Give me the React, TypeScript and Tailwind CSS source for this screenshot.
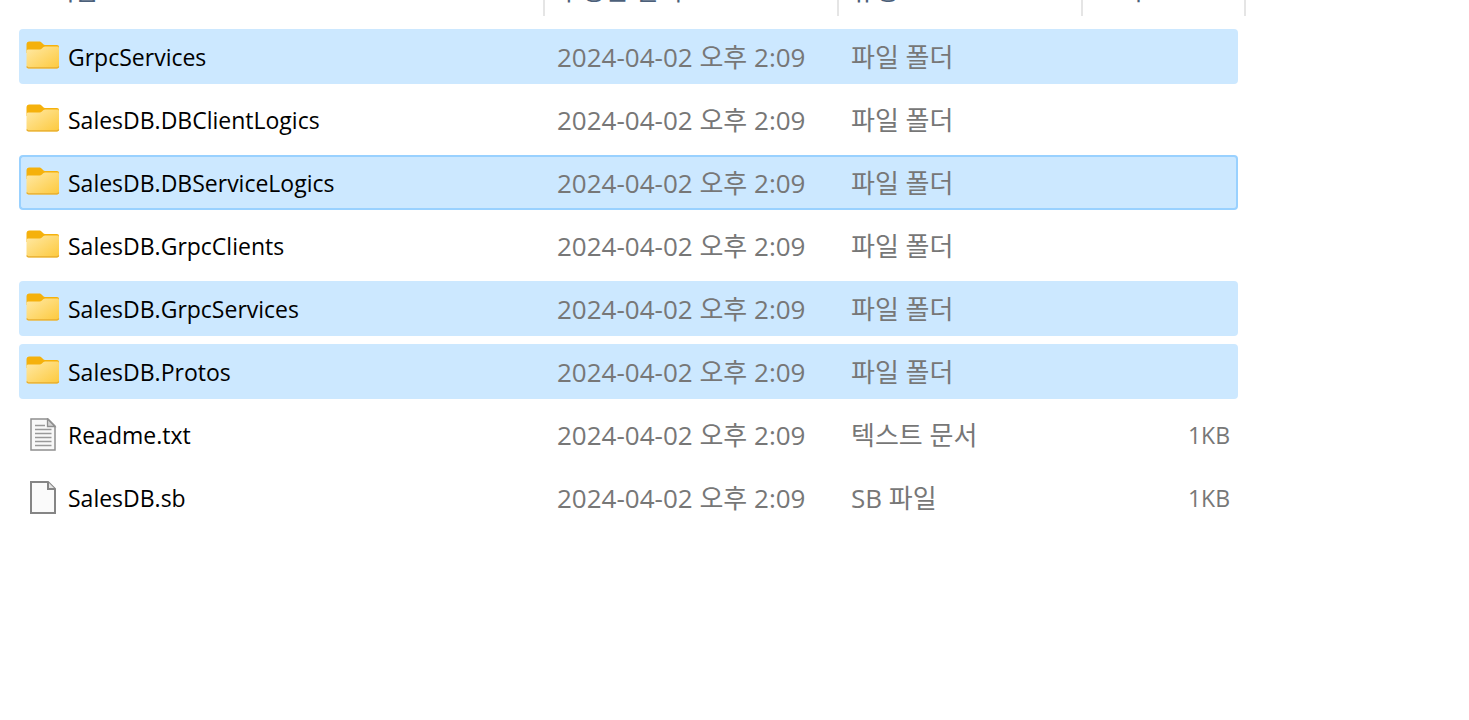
import clsx from 'clsx'

type FileKind = 'folder' | 'text' | 'file'

interface FileEntry {
  name:      string
  modified:  string
  type:      string
  size?:     string
  kind:      FileKind
  selected?: boolean
  focused?:  boolean
}

const FILES: FileEntry[] = [
  { name: 'GrpcServices',           modified: '2024-04-02 오후 2:09', type: '파일 폴더',   kind: 'folder', selected: true },
  { name: 'SalesDB.DBClientLogics', modified: '2024-04-02 오후 2:09', type: '파일 폴더',   kind: 'folder' },
  { name: 'SalesDB.DBServiceLogics', modified: '2024-04-02 오후 2:09', type: '파일 폴더',  kind: 'folder', selected: true, focused: true },
  { name: 'SalesDB.GrpcClients',    modified: '2024-04-02 오후 2:09', type: '파일 폴더',   kind: 'folder' },
  { name: 'SalesDB.GrpcServices',   modified: '2024-04-02 오후 2:09', type: '파일 폴더',   kind: 'folder', selected: true },
  { name: 'SalesDB.Protos',         modified: '2024-04-02 오후 2:09', type: '파일 폴더',   kind: 'folder', selected: true },
  { name: 'Readme.txt',             modified: '2024-04-02 오후 2:09', type: '텍스트 문서', kind: 'text', size: '1KB' },
  { name: 'SalesDB.sb',             modified: '2024-04-02 오후 2:09', type: 'SB 파일',     kind: 'file', size: '1KB' },
]

function FolderIcon() {
  return (
    <svg viewBox="0 0 34 34" className="h-[34px] w-[34px] shrink-0" aria-hidden="true">
      <defs>
        <linearGradient id="folder-front" x1="0" y1="0" x2="1" y2="1">
          <stop offset="0" stopColor="#ffe9a6" />
          <stop offset="1" stopColor="#fdc93c" />
        </linearGradient>
      </defs>
      <path d="M0.500 4.500a3 3 0 0 1 3-3h9.500c1.200 0 2 .4 2.800 1.200l1.500 1.600c.5.500.9.700 1.600.7H31a2 2 0 0 1 2 2v6H0.500z" fill="#f5b10c" />
      <path d="M0.500 11a1.500 1.500 0 0 1 1.500-1.500h11.500c1 0 1.700-.3 2.400-1l1.300-1.200c.6-.5 1.100-.8 2-.8H31.500A1.500 1.500 0 0 1 33 8V26.500a2 2 0 0 1-2 2H2.500a2 2 0 0 1-2-2z" fill="url(#folder-front)" />
      <path d="M0.800 26.500a2 2 0 0 0 1.800 1.400h28.300a2 2 0 0 0 1.800-1.400" fill="none" stroke="#e6ac2e" strokeWidth="1.300" />
    </svg>
  )
}

function TextFileIcon() {
  return (
    <svg viewBox="0 0 34 34" className="h-[34px] w-[34px] shrink-0" aria-hidden="true">
      <path d="M5 1h17l7 7v24H5z" fill="#f8f8f8" stroke="#8f8f8f" strokeWidth="1.500" />
      <path d="M21.500 1v7.500H29z" fill="#d4d4d4" stroke="#8f8f8f" strokeWidth="1.300" />
      <path d="M9 7.500h10M9 11.500h16.500M9 15.500h16.500M9 19.500h16.500M9 23.500h16.500M9 27.500h16.500" stroke="#999" strokeWidth="1.500" />
    </svg>
  )
}

function BlankFileIcon() {
  return (
    <svg viewBox="0 0 34 34" className="h-[34px] w-[34px] shrink-0" aria-hidden="true">
      <path d="M5 1h17l7 7V32H5z" fill="#fafafa" stroke="#858585" strokeWidth="2" />
      <path d="M22 1v7h7" fill="#e4e4e4" stroke="#858585" strokeWidth="2" />
    </svg>
  )
}

const ICONS = { folder: FolderIcon, text: TextFileIcon, file: BlankFileIcon }

function FileRow({ file }: { file: FileEntry }) {
  const Icon = ICONS[file.kind]
  const cell = clsx(
    'h-[55px] border-y-2 p-0 whitespace-nowrap',
    file.selected ? 'bg-[#cce8ff]' : 'bg-white',
    file.focused ? 'border-[#99d1ff]' : file.selected ? 'border-[#cce8ff]' : 'border-white',
  )

  return (
    <tr aria-selected={!!file.selected}>
      <td className={clsx(cell, 'rounded-l border-l-2 pl-[5px] text-black')}>
        <div className="flex items-center gap-2">
          <Icon />
          <span className="text-[23px]">{file.name}</span>
        </div>
      </td>
      <td className={clsx(cell, 'pl-3')}>{file.modified}</td>
      <td className={clsx(cell, 'pl-3')}>{file.type}</td>
      <td className={clsx(cell, 'rounded-r border-r-2 pr-[6px] text-right text-[23px]')}>{file.size}</td>
    </tr>
  )
}

function HeaderLabel({ label, first }: { label: string; first?: boolean }) {
  return (
    <div className={clsx('flex h-14 items-center border-r-2 border-[#e5e5e5] pt-1', first ? 'pl-8' : 'pl-3')}>
      {label}
    </div>
  )
}

export default function App() {
  return (
    <main className="min-h-screen overflow-hidden bg-white pr-[223px] pl-[19px] font-['Open_Sans','Noto_Sans_CJK_KR',sans-serif]">
      {/* Column headings are scrolled partly out of view */}
      <table className="-mt-12 w-full table-fixed border-separate border-spacing-x-0 border-spacing-y-2 text-[26px] leading-8 text-[#777]">
        <colgroup>
          <col />
          <col className="w-[294px]" />
          <col className="w-[244px]" />
          <col className="w-[155px]" />
          <col className="w-2" />
        </colgroup>
        <thead className="text-[#4c607a]">
          <tr>
            <th scope="col" className="p-0 pb-[5px] font-normal"><HeaderLabel label="이름" first /></th>
            <th scope="col" className="p-0 pb-[5px] font-normal"><HeaderLabel label="수정한 날짜" /></th>
            <th scope="col" className="p-0 pb-[5px] font-normal"><HeaderLabel label="유형" /></th>
            <th scope="col" colSpan={2} className="p-0 pb-[5px] font-normal"><HeaderLabel label="크기" /></th>
          </tr>
        </thead>
        <tbody>
          {FILES.map((file) => (
            <FileRow key={file.name} file={file} />
          ))}
        </tbody>
      </table>
    </main>
  )
}
